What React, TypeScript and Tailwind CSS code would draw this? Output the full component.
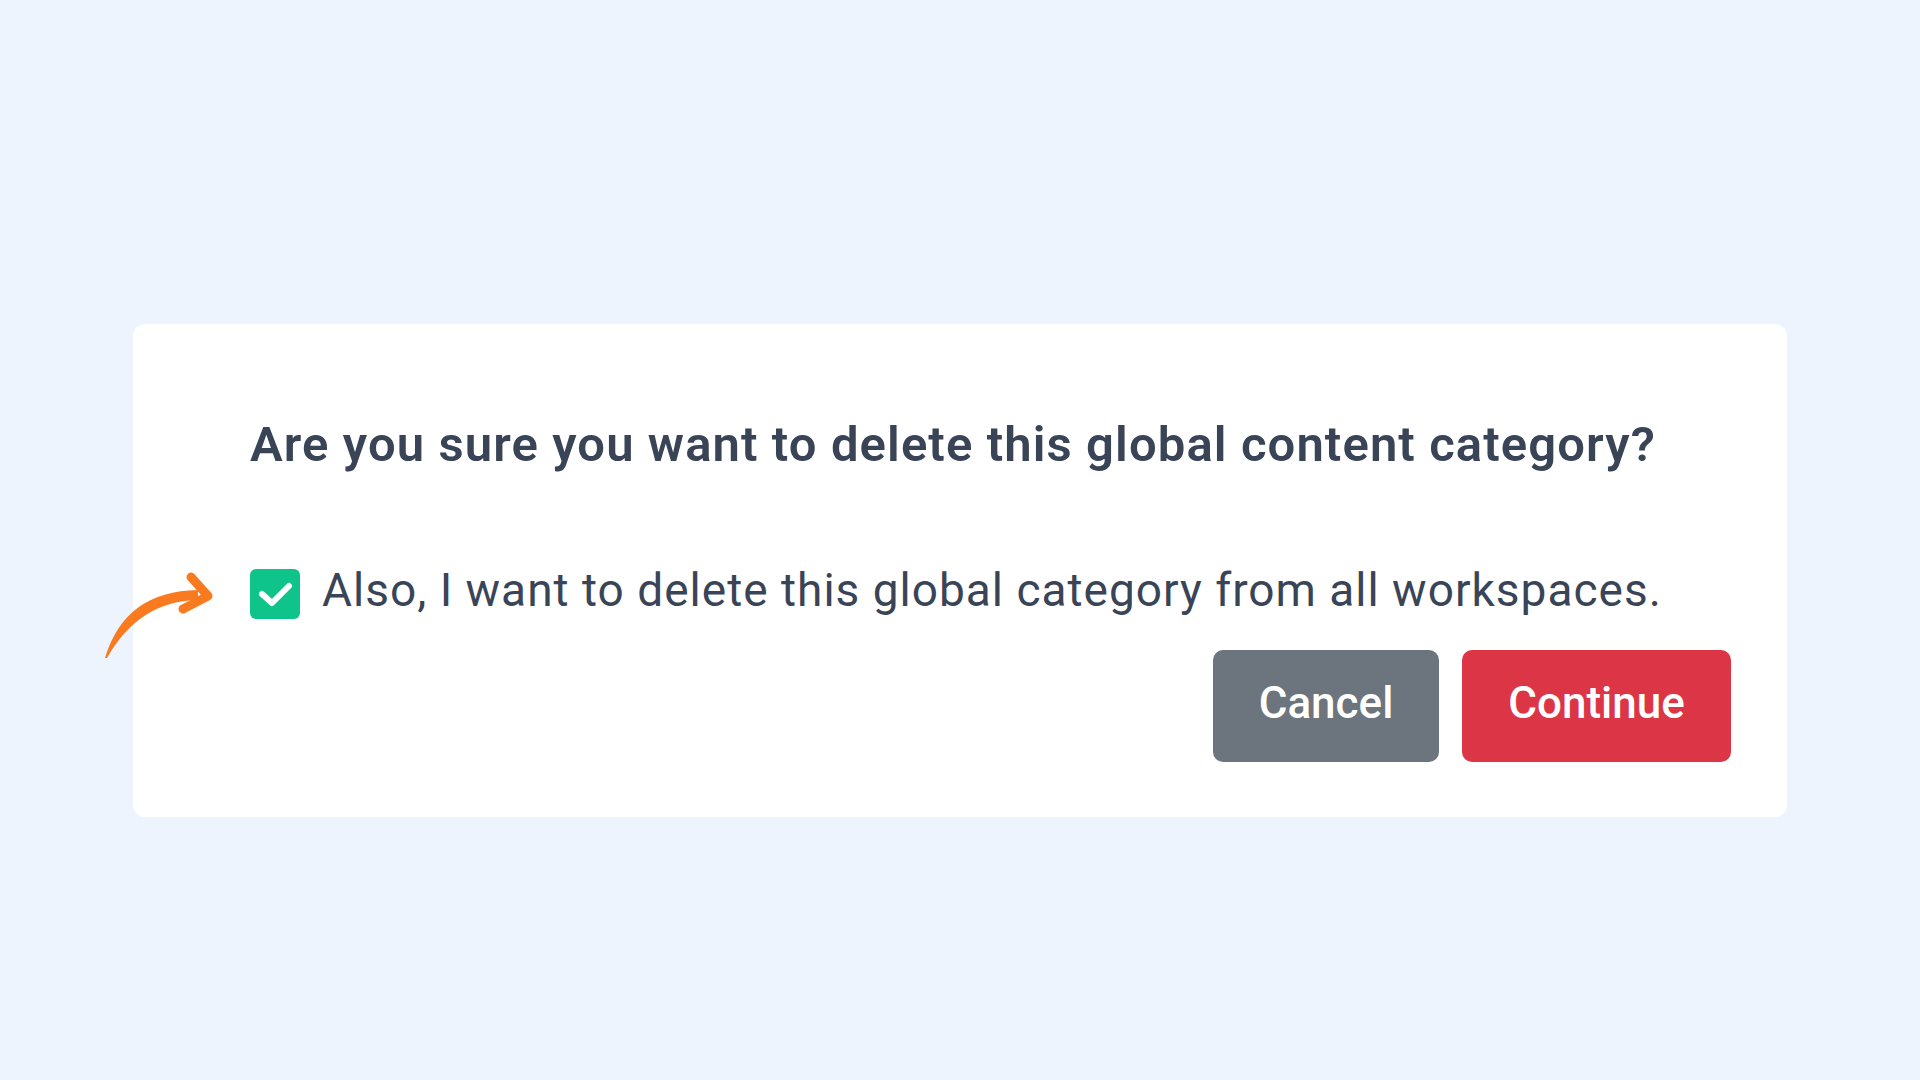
import React from "react";

// Curved hand-drawn arrow pointing at the checkbox
const PointerArrow = () => (
    <svg
        className="absolute left-[97px] top-[568px]"
        width="122"
        height="97"
        viewBox="0 0 122 97"
        fill="none"
    >
        <path d="M8 90 Q28 23 101 22 L101 32 Q42 33 10 90 Z" fill="#f97a1f" />
        <path
            d="M94 9 L111 28 L86 41"
            stroke="#f97a1f"
            strokeWidth="9"
            strokeLinecap="round"
            strokeLinejoin="round"
        />
    </svg>
);

const CheckBox = () => (
    <div className="flex h-[50px] w-[50px] shrink-0 items-center justify-center rounded-[6px] bg-[#0fc48a]">
        <svg width="50" height="50" viewBox="0 0 50 50" fill="none">
            <path
                d="M12 25 L22 34 L39 17"
                stroke="#ffffff"
                strokeWidth="6"
                strokeLinecap="round"
                strokeLinejoin="round"
            />
        </svg>
    </div>
);

export default function App() {
    return (
        <div
            className="relative min-h-screen w-full bg-[#edf4fe] pt-[324px]"
            style={{ fontFamily: "Roboto, 'Noto Sans', sans-serif" }}
        >
            <div className="mx-auto w-[1654px] rounded-[12px] bg-white pt-[96px] pr-[56px] pb-[55px] pl-[117px]">
                <h2 className="text-[49px] font-semibold leading-[49px] tracking-[1.1px] text-[#3a4457]">
                    Are you sure you want to delete this global content category?
                </h2>

                <label className="mt-[100px] flex items-start gap-[22px]">
                    <CheckBox />
                    <span className="text-[46px] leading-[42px] tracking-[1px] text-[#3a4457]">
                        Also, I want to delete this global category from all workspaces.
                    </span>
                </label>

                <div className="mt-[31px] flex justify-end gap-[23px]">
                    <button className="h-[112px] w-[226px] rounded-[10px] bg-[#6c757d] pb-[7px] text-[44px] font-medium text-white">
                        Cancel
                    </button>
                    <button className="h-[112px] w-[269px] rounded-[10px] bg-[#dc3545] pb-[7px] text-[44px] font-medium text-white">
                        Continue
                    </button>
                </div>
            </div>

            <PointerArrow />
        </div>
    );
}
